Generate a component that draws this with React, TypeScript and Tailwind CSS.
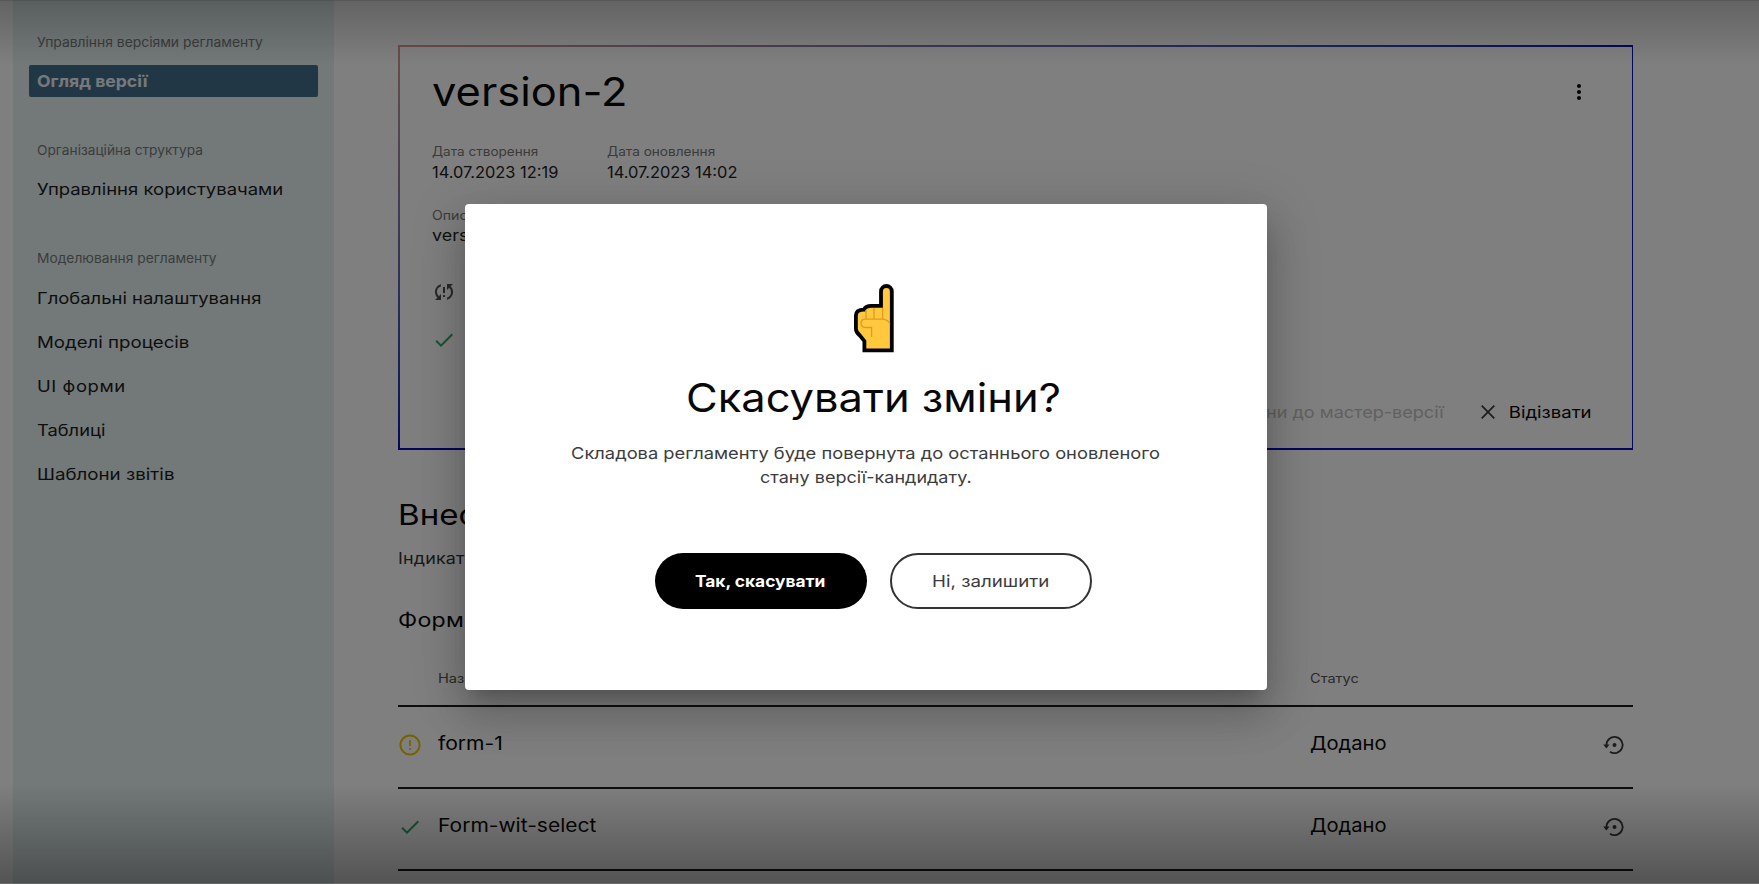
import React from "react";
import { MdCheck, MdMoreVert, MdSyncProblem } from "react-icons/md";

/* Widens the letterforms horizontally; the scale class sets by how much. */
function Wide({ children, className }: { children: React.ReactNode; className: string }) {
  return <span className={`block w-max whitespace-nowrap ${className}`}>{children}</span>;
}

function NavLabel({ children, scale, className }: { children: string; scale: string; className: string }) {
  return (
    <div className={`pl-2 text-[13px] leading-5 text-[#777b7b] ${className}`}>
      <Wide className={`origin-left ${scale}`}>{children}</Wide>
    </div>
  );
}

const modelLinks = [
  { label: "Глобальні налаштування", scale: "scale-x-[1.117]" },
  { label: "Моделі процесів", scale: "scale-x-[1.13]" },
  { label: "UI форми", scale: "scale-x-[1.12] tracking-[0.5px]" },
  { label: "Таблиці", scale: "scale-x-[1.11]" },
  { label: "Шаблони звітів", scale: "scale-x-[1.135]" },
];

function Sidebar() {
  return (
    <nav className="ml-[13px] flex w-[321px] shrink-0 flex-col bg-[#e6f2f2] pr-4 pl-4 pt-8 text-[#1c1c1c]">
      <NavLabel scale="scale-x-[1.066]" className="">
        Управління версіями регламенту
      </NavLabel>
      <div className="mt-[13px] h-8 rounded-xs bg-[#456e8c] pl-[7.5px] text-[16.5px] leading-8 font-bold text-[#eaf3f6]">
        <Wide className="origin-left scale-x-[1.065]">Огляд версії</Wide>
      </div>
      <NavLabel scale="scale-x-[1.054]" className="mt-[43px]">
        Організаційна структура
      </NavLabel>
      <div className="mt-[13px] pl-2 text-[16.5px] leading-8">
        <Wide className="origin-left scale-x-[1.12]">Управління користувачами</Wide>
      </div>
      <NavLabel scale="scale-x-[1.06]" className="mt-[43px]">
        Моделювання регламенту
      </NavLabel>
      <div className="mt-[13.5px] flex flex-col gap-[12.2px] pl-[7.6px] text-[16.5px] leading-8">
        {modelLinks.map((l) => (
          <Wide key={l.label} className={`origin-left ${l.scale}`}>
            {l.label}
          </Wide>
        ))}
      </div>
    </nav>
  );
}

function RestoreIcon() {
  return (
    <svg width="24" height="24" viewBox="0 0 24 24" fill="none">
      <path d="M4.4 12a8.1 8.1 0 1 1 3.6 6.8" stroke="#3a3a3a" strokeWidth="1.8" />
      <path d="M1.2 11.6h6.4L4.4 15.4z" fill="#3a3a3a" />
      <circle cx="12.5" cy="12" r="2" fill="#3a3a3a" />
    </svg>
  );
}

function WarnIcon() {
  return (
    <svg width="24" height="24" viewBox="0 0 24 24" fill="none">
      <circle cx="12" cy="12" r="9.6" stroke="#ecc400" strokeWidth="2" />
      <path d="M12 7v6M12 15v2" stroke="#ecc400" strokeWidth="1.7" />
    </svg>
  );
}

function Row({ icon, name, scale }: { icon: React.ReactNode; name: string; scale: string }) {
  return (
    <div className="flex h-[82px] items-center border-b-2 border-[#1c1c1c] pb-[9px] text-[18.5px] leading-7">
      <div className="w-10 pt-[5px]">{icon}</div>
      <div className="flex-1">
        <Wide className={`origin-left ${scale}`}>{name}</Wide>
      </div>
      <div className="w-[291px]">
        <Wide className="origin-left scale-x-[1.09]">Додано</Wide>
      </div>
      <div className="w-8 pt-[5px] pl-px">
        <RestoreIcon />
      </div>
    </div>
  );
}

function Meta({ label, value, labelScale }: { label: string; value: string; labelScale: string }) {
  return (
    <div className="w-[174.5px]">
      <div className="text-[12.5px] leading-5 text-[#777]">
        <Wide className={`origin-left ${labelScale}`}>{label}</Wide>
      </div>
      <div className="text-[16px] leading-[20px] text-[#222]">
        <Wide className="origin-left scale-x-[1.025]">{value}</Wide>
      </div>
    </div>
  );
}

function VersionCard() {
  return (
    <section className="h-[405px] bg-linear-to-br from-[#dc9a90] to-[#0a0abe] to-50% p-[1.6px]">
      <div className="flex h-full flex-col bg-white pr-[40px] pl-[32.5px]">
        <div className="mt-[21.4px] flex h-12 items-center justify-between">
          <h1 className="text-[39.5px] leading-[48px]">
            <Wide className="origin-left scale-x-[1.1]">version-2</Wide>
          </h1>
          <MdMoreVert size={24} className="mr-px" />
        </div>
        <div className="mt-[26px] flex h-10">
          <Meta label="Дата створення" value="14.07.2023 12:19" labelScale="scale-x-[1.085]" />
          <Meta label="Дата оновлення" value="14.07.2023 14:02" labelScale="scale-x-[1.09]" />
        </div>
        <div className="mt-6">
          <div className="text-[12.5px] leading-5 text-[#777]">
            <Wide className="origin-left scale-x-[1.13]">Опис</Wide>
          </div>
          <div className="text-[16px] leading-[19px] text-[#222]">
            <Wide className="origin-left scale-x-[1.12]">version-2</Wide>
          </div>
        </div>
        <MdSyncProblem size={24} className="mt-[35px] text-[#505050]" />
        <MdCheck size={24} className="mt-6 text-[#2fa866]" />
        <div className="mt-12 flex items-center justify-end text-[16.5px] leading-6">
          <Wide className="origin-right scale-x-[1.094] text-[#c2c2c2]">Застосувати зміни до мастер-версії</Wide>
          <svg className="ml-[37.5px]" width="14" height="14" viewBox="0 0 14 14">
            <path d="M0.7 0.7 13.3 13.3M13.3 0.7 0.7 13.3" stroke="#3a3a3a" strokeWidth="1.7" />
          </svg>
          <div className="flex w-[96.5px] justify-end">
            <Wide className="origin-right scale-x-[1.125]">Відізвати</Wide>
          </div>
        </div>
      </div>
    </section>
  );
}

function PointingHand() {
  return (
    <svg width="40" height="69" viewBox="0 0 40 69" fill="none" strokeLinejoin="miter">
      <path
        d="M10.4 66.4V57.2L6 51.6Q1.9 48.6 1.9 44.5V31.5Q1.9 25.8 10 25.6Q11.4 21.9 17.5 21.8H27V7.4A5.4 5.4 0 0 1 37.8 7.4V66.4Z"
        fill="#ffc83d"
        stroke="#000"
        strokeWidth="3.8"
      />
      <path
        d="M12 26V34.5M20 24V34.5M28.6 24V34.5M36 39.5Q33 35.2 28 35.2H11.2Q7 35.4 7 39.3T11.2 43.5H17.6V53"
        stroke="#dd9a25"
        strokeWidth="1.3"
      />
    </svg>
  );
}

function ConfirmDialog() {
  return (
    <div className="mt-[204.4px] ml-[464.5px] flex h-[485.4px] w-[802px] flex-col items-center rounded bg-white pt-[79.6px] shadow-[0_12px_17px_-8px_rgba(0,0,0,0.2),0_26px_42px_3px_rgba(0,0,0,0.14),0_10px_51px_9px_rgba(0,0,0,0.12)]">
      <div className="pl-4">
        <PointingHand />
      </div>
      <h2 className="mt-[21px] pl-4 text-[39.5px] leading-[48px]">
        <Wide className="scale-x-[1.1]">Скасувати зміни?</Wide>
      </h2>
      <div className="mt-[18.6px] flex flex-col items-center text-[16.5px] leading-[24px] text-[#3c3c3c]">
        <Wide className="scale-x-[1.109]">Складова регламенту буде повернута до останнього оновленого</Wide>
        <Wide className="scale-x-[1.093]">стану версії-кандидату.</Wide>
      </div>
      <div className="mt-[64.5px] flex gap-[23.5px] pl-4">
        <button className="flex h-14 w-[212px] items-center justify-center rounded-full bg-black pr-px text-[16px] font-bold text-white">
          <Wide className="scale-x-[1.083]">Так, скасувати</Wide>
        </button>
        <button className="flex h-14 w-[202px] items-center justify-center rounded-full border-2 border-[#333] bg-white pr-px text-[16.5px] text-[#3c3c3c]">
          <Wide className="scale-x-[1.135]">Ні, залишити</Wide>
        </button>
      </div>
    </div>
  );
}

export default function App() {
  return (
    <div className="relative h-[884px] w-[1759px] overflow-hidden bg-white font-[Inter,'Noto_Sans',sans-serif] text-[#080808]">
      <div className="flex h-full">
        <Sidebar />
        <main className="ml-[64.4px] w-[1235px] pt-[45px]">
          <VersionCard />
          <h2 className="mt-[47px] text-[28.5px] leading-9">
            <Wide className="origin-left scale-x-[1.16]">Внесені зміни</Wide>
          </h2>
          <p className="mt-[15px] text-[16px] leading-5 text-[#333]">
            <Wide className="origin-left scale-x-[1.12] tracking-[0.15px]">Індикатори змін</Wide>
          </p>
          <h3 className="mt-[37.5px] text-[20px] leading-7">
            <Wide className="origin-left scale-x-[1.157] tracking-[0.25px]">Форми</Wide>
          </h3>
          <div className="mt-[15.5px] flex h-[58px] items-center border-b-2 border-[#1c1c1c] pt-1 text-[12.5px] leading-5 text-[#555]">
            <div className="ml-[39.5px] flex-1">
              <Wide className="origin-left scale-x-[1.17]">Назва</Wide>
            </div>
            <div className="w-[323px]">
              <Wide className="origin-left scale-x-[1.165]">Статус</Wide>
            </div>
          </div>
          <Row icon={<WarnIcon />} name="form-1" scale="scale-x-[1.14]" />
          <Row icon={<MdCheck size={24} className="text-[#2fa866]" />} name="Form-wit-select" scale="scale-x-[1.135]" />
        </main>
      </div>

      <div className="absolute inset-0 flex flex-col justify-between bg-black/50">
        <div className="h-[65px] border-t border-black/30 bg-linear-to-b from-black/22 to-transparent" />
        <div className="h-[100px] border-b border-black/15 bg-linear-to-t from-black/34 to-transparent" />
      </div>
      <div className="absolute inset-0">
        <ConfirmDialog />
      </div>
    </div>
  );
}
